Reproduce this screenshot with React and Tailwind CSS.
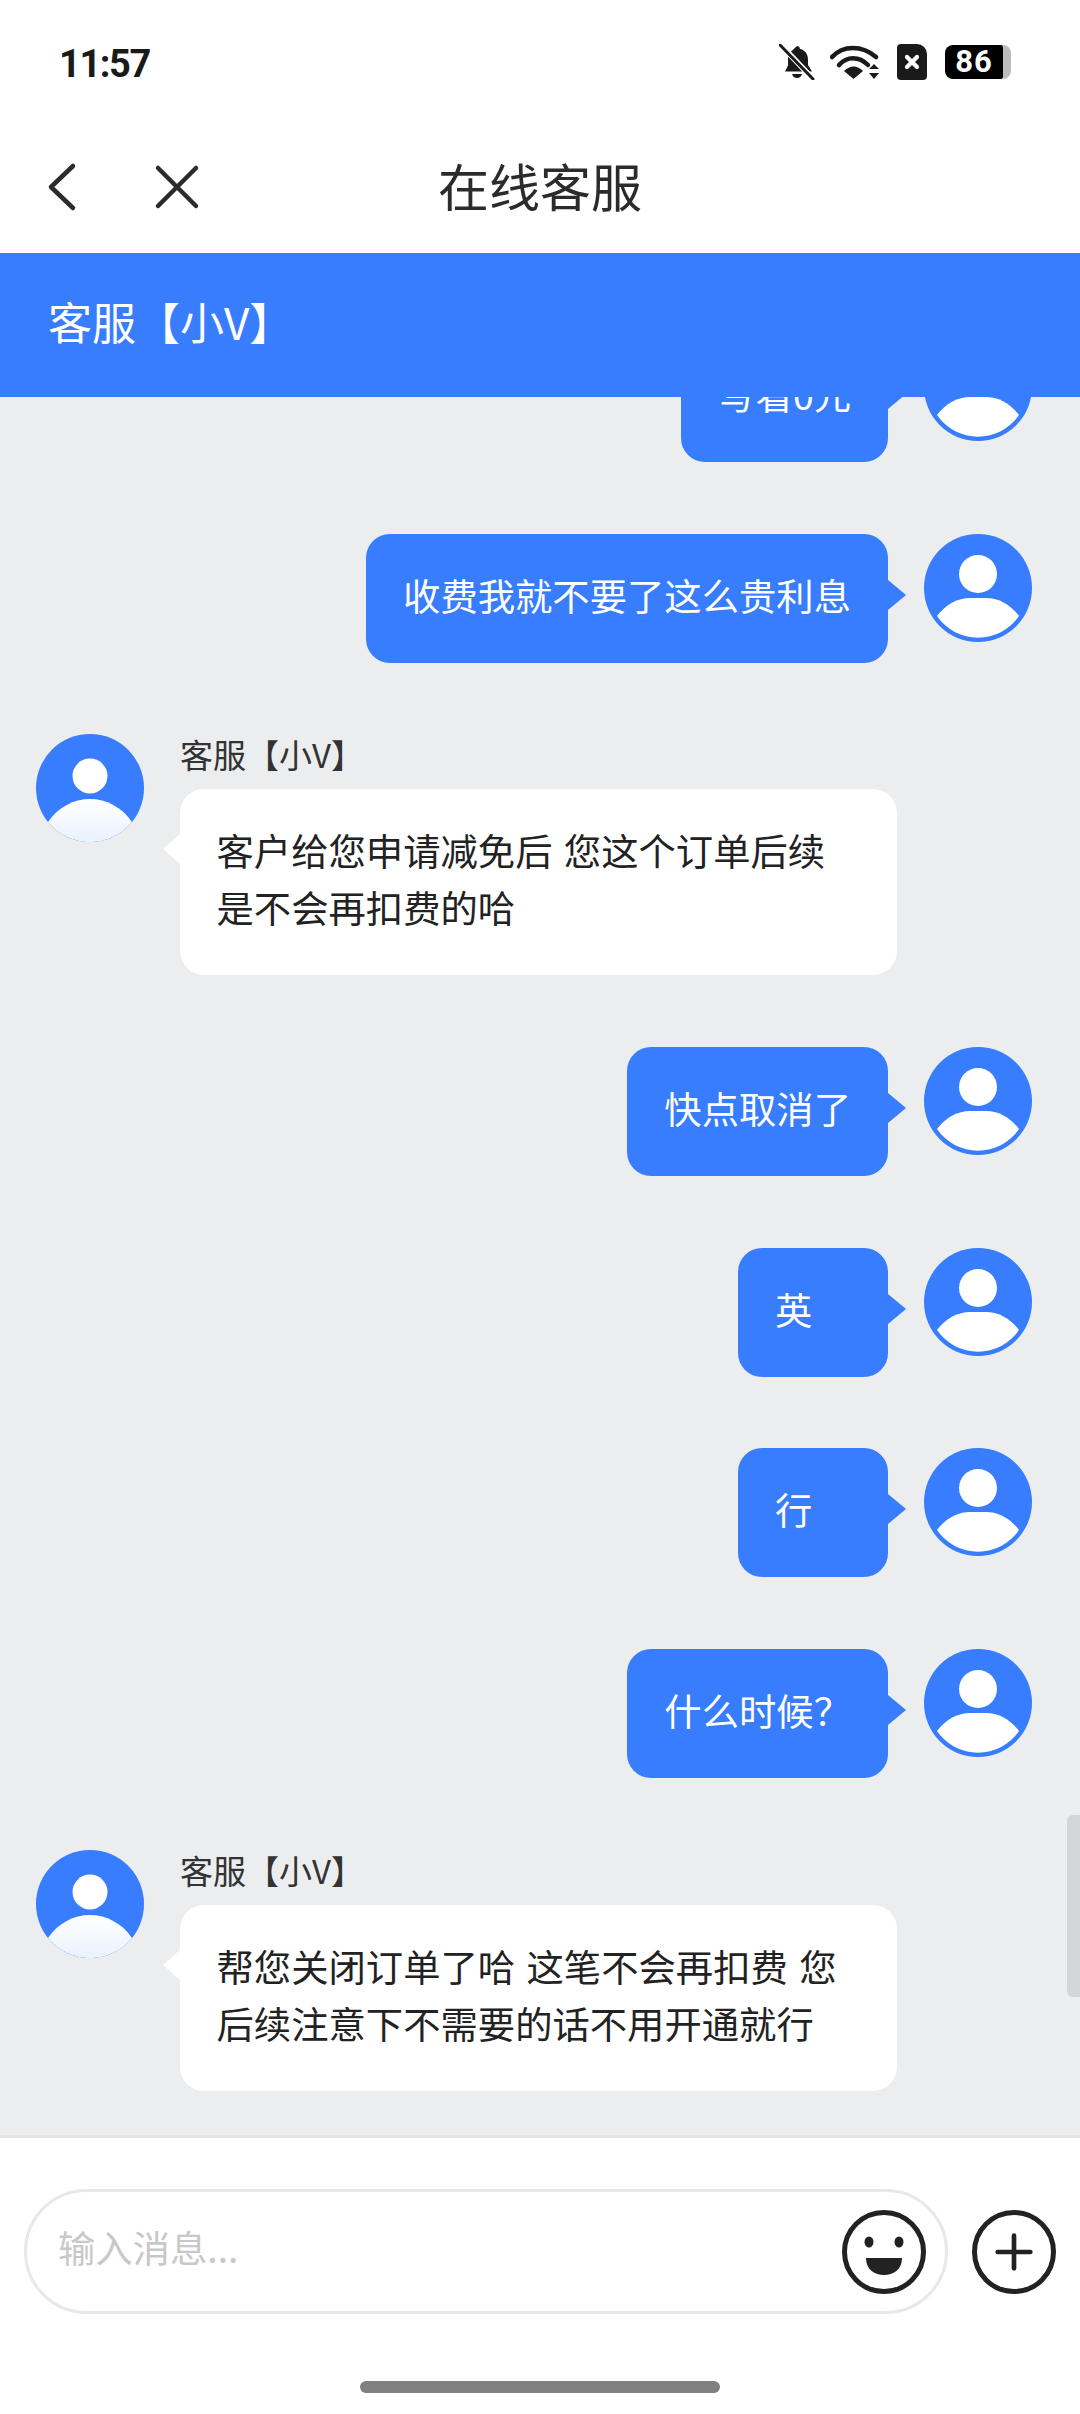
import React from 'react';
import { X, Plus } from 'lucide-react';

const cjk = { fontFamily: '"Noto Sans CJK SC", "Noto Sans", sans-serif' };

const UserAvatar = () => (
    <svg viewBox="0 0 108 108" className="size-[108px] shrink-0">
        <circle cx="54" cy="54" r="54" fill="#377dfd" />
        <circle cx="54" cy="40" r="19" fill="#fff" />
        <path d="M13 82C22 70 34 64 46 64H62C74 64 86 70 95 82A49.6 49.6 0 0 1 13 82Z" fill="#fff" />
    </svg>
);

const AgentAvatar = () => (
    <svg viewBox="0 0 108 108" className="size-[108px] shrink-0">
        <defs>
            <linearGradient id="agentBody" x1="0" y1="0" x2="0" y2="1">
                <stop offset="0" stopColor="#ffffff" />
                <stop offset="1" stopColor="#eaf2ff" />
            </linearGradient>
        </defs>
        <circle cx="54" cy="54" r="54" fill="#377dfd" />
        <circle cx="54" cy="42" r="17.5" fill="#fff" />
        <path d="M12 88C22 73 38 65 54 65C70 65 86 73 96 88A54 54 0 0 1 12 88Z" fill="url(#agentBody)" />
    </svg>
);

const SentMessage = ({ text }) => (
    <div className="flex justify-end items-start pr-[48px]">
        <div className="relative mr-[36px] min-w-[150px] bg-[#377dfd] text-white rounded-[24px] px-[37px] pt-[33px] pb-[39px] text-[37.33px] leading-[57px]">
            {text}
            <span className="absolute top-[46px] -right-[18px] border-y-[15px] border-y-transparent border-l-[18px] border-l-[#377dfd]"></span>
        </div>
        <UserAvatar />
    </div>
);

const AgentMessage = ({ text }) => (
    <div className="flex items-start pl-[36px]">
        <AgentAvatar />
        <div className="ml-[36px]">
            <div className="text-[33px] leading-[40px] text-[#333] mb-[15px]">客服【小V】</div>
            <div className="relative w-[717px] bg-white text-[#222] rounded-[24px] pl-[36.5px] pr-[42px] pt-[33px] pb-[39px] text-[37.33px] leading-[57px] [word-spacing:3px]">
                {text}
                <span className="absolute top-[45px] -left-[17px] border-y-[15px] border-y-transparent border-r-[17px] border-r-white"></span>
            </div>
        </div>
    </div>
);

const StatusIcons = () => (
    <div className="flex items-center">
        {/* muted bell */}
        <svg viewBox="0 0 36 36" className="size-[36px]">
            <path d="M18 2c1.500 0 2.800 1 2.800 2.800C27 6.500 29 11 29 16v5l4 6.500H6l3-6v-6c0-2.500 .5-4.500 1.500-6.500z" fill="#1a1a1a" />
            <path d="M13 30h10c-1 3-3 4-5 4s-4-1-5-4z" fill="#1a1a1a" />
            <path d="M2 1l32 34" stroke="#fff" strokeWidth="5.500" />
            <path d="M1 1l33 34" stroke="#1a1a1a" strokeWidth="3" strokeLinecap="round" />
        </svg>
        {/* wifi with up/down arrows */}
        <svg viewBox="0 0 52 36" className="ml-[15px] w-[52px] h-[36px]">
            <g fill="none" stroke="#1a1a1a" strokeWidth="4.500" strokeLinecap="round">
                <path d="M2 13C13 1 32 1 46 13" />
                <path d="M9 21C17 12 29 12 38 21" />
            </g>
            <path d="M14 27c6-6 13-6 19 0l-9.500 8z" fill="#1a1a1a" />
            <path d="M44 20l5 5H39zM44 35l5-6H39z" fill="#1a1a1a" />
        </svg>
        {/* sim card with x */}
        <div className="ml-[15px] w-[30px] h-[36px] bg-[#1a1a1a] rounded-l-[4px] rounded-br-[4px] rounded-tr-[10px] flex items-center justify-center">
            <X size={20} strokeWidth={5} color="#fff" />
        </div>
        {/* battery */}
        <div className="ml-[18px] flex items-center">
            <div className="w-[58px] h-[34px] bg-black rounded-l-[8px] rounded-r-[2px] flex items-center justify-center text-white text-[31px] tracking-[1px] font-bold" style={{ fontFamily: 'Roboto, sans-serif' }}>86</div>
            <div className="w-[8px] h-[34px] bg-[#bdbdbd] rounded-r-[8px]"></div>
        </div>
    </div>
);

const App = () => {
    return (
        <div className="w-[1080px] h-[2414px] flex flex-col bg-white overflow-hidden" style={cjk}>
            <div className="h-[80px] mt-[22px] pl-[59px] pr-[69px] flex items-center justify-between">
                <span className="text-[38px] font-bold tracking-[-1.4px] text-[#1a1a1a] pt-[4px]" style={{ fontFamily: 'Roboto, sans-serif' }}>11:57</span>
                <StatusIcons />
            </div>
            <div className="relative h-[151px] flex items-center justify-center">
                <div className="absolute left-[46px] top-[59px] flex items-center">
                    {/* back chevron */}
                    <svg viewBox="0 0 32 52" className="w-[32px] h-[52px]" fill="none" stroke="#2b2b2b" strokeWidth="4.500" strokeLinecap="round" strokeLinejoin="round">
                        <path d="M27 5L5 26L27 47" />
                    </svg>
                    <svg viewBox="0 0 48 48" className="ml-[75px] size-[48px]" fill="none" stroke="#2b2b2b" strokeWidth="4.500" strokeLinecap="round">
                        <path d="M5 5L43 43M43 5L5 43" />
                    </svg>
                </div>
                <span className="text-[51px] text-[#2b2b2b] pt-[16px]">在线客服</span>
            </div>
            <div className="h-[144px] bg-[#377dfd] flex items-center pl-[48px] pb-[8px] text-[44px] text-white">客服【小V】</div>

            <div className="relative flex-1 bg-[#ecedef] overflow-hidden flex flex-col justify-end gap-[71.67px] pb-[44.5px]">
                <SentMessage text="写看0元" />
                <SentMessage text="收费我就不要了这么贵利息" />
                <AgentMessage text="客户给您申请减免后 您这个订单后续是不会再扣费的哈" />
                <SentMessage text="快点取消了" />
                <SentMessage text="英" />
                <SentMessage text="行" />
                <SentMessage text="什么时候？" />
                <AgentMessage text="帮您关闭订单了哈 这笔不会再扣费 您后续注意下不需要的话不用开通就行" />
                <div className="absolute right-0 top-[1418px] w-[13px] h-[182px] bg-[#d4d5d7] rounded-l-[6px]"></div>
            </div>

            <div className="h-[279px] shrink-0 border-t-[3px] border-[#e4e4e4] bg-white">
                <div className="flex items-center pl-[24px] pt-[51px]">
                    <div className="w-[924px] h-[125px] rounded-full border-[3px] border-[#e8e8e8] flex items-center justify-between pl-[31px] pr-[19px]">
                        <span className="text-[37.33px] text-[#c8c8c8] pb-[8px]">输入消息...</span>
                        <svg viewBox="0 0 84 84" className="size-[84px]">
                            <circle cx="42" cy="42" r="39.500" fill="none" stroke="#222" strokeWidth="5" />
                            <ellipse cx="27" cy="32" rx="4.500" ry="5.500" fill="#222" />
                            <ellipse cx="57" cy="32" rx="4.500" ry="5.500" fill="#222" />
                            <path d="M24 48H60C60 60 51 65 42 65S24 60 24 48Z" fill="#222" />
                        </svg>
                    </div>
                    <div className="ml-[24px] size-[84px] rounded-full border-[5px] border-[#222] flex items-center justify-center">
                        <Plus size={56} strokeWidth={2} color="#222" />
                    </div>
                </div>
                <div className="mx-auto mt-[67px] w-[360px] h-[12px] rounded-full bg-[#808080]"></div>
            </div>
        </div>
    );
};

export default App;
